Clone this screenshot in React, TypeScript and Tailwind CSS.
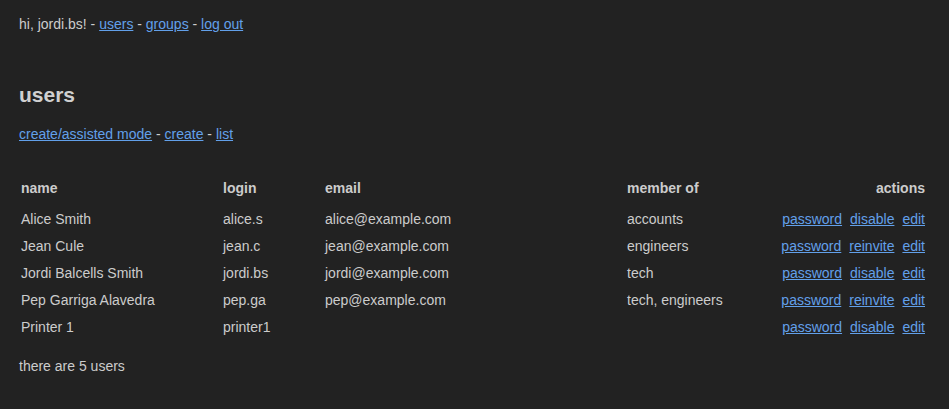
const users = [
  { name: 'Alice Smith', login: 'alice.s', email: 'alice@example.com', groups: 'accounts', invite: false },
  { name: 'Jean Cule', login: 'jean.c', email: 'jean@example.com', groups: 'engineers', invite: true },
  { name: 'Jordi Balcells Smith', login: 'jordi.bs', email: 'jordi@example.com', groups: 'tech', invite: false },
  { name: 'Pep Garriga Alavedra', login: 'pep.ga', email: 'pep@example.com', groups: 'tech, engineers', invite: true },
  { name: 'Printer 1', login: 'printer1', email: '', groups: '', invite: false },
]

function Link({ children }: { children: React.ReactNode }) {
  return (
    <a href="#" className="text-[#62a0ea] underline">
      {children}
    </a>
  )
}

export default function App() {
  return (
    <div className="min-h-[409px] bg-[#222222] px-[19px] pt-4 font-['Liberation_Sans',Arial,sans-serif] text-[14px] leading-4 text-[#cccccc]">
      <p>
        hi, jordi.bs! - <Link>users</Link> - <Link>groups</Link> - <Link>log out</Link>
      </p>

      <h2 className="mt-[51px] text-[21px] leading-6 font-bold text-[#d0d0d0]">users</h2>

      <p className="mt-[19px]">
        <Link>create/assisted mode</Link> - <Link>create</Link> - <Link>list</Link>
      </p>

      <table className="mt-[29px] w-full table-fixed border-collapse">
        <colgroup>
          <col className="w-[204px]" />
          <col className="w-[102px]" />
          <col className="w-[302px]" />
          <col />
          <col className="w-[160px]" />
        </colgroup>
        <thead>
          <tr className="h-[34px] text-left font-bold">
            <th className="pl-[2px]">name</th>
            <th>login</th>
            <th>email</th>
            <th>member of</th>
            <th className="pr-[5px] text-right">actions</th>
          </tr>
        </thead>
        <tbody>
          {users.map((u) => (
            <tr key={u.login} className="h-[27px]">
              <td className="pl-[2px]">{u.name}</td>
              <td>{u.login}</td>
              <td>{u.email}</td>
              <td>{u.groups}</td>
              <td className="pr-[5px]">
                <div className="flex justify-end gap-2">
                  <Link>password</Link>
                  <Link>{u.invite ? 'reinvite' : 'disable'}</Link>
                  <Link>edit</Link>
                </div>
              </td>
            </tr>
          ))}
        </tbody>
      </table>

      <p className="mt-[18px]">there are 5 users</p>
    </div>
  )
}
